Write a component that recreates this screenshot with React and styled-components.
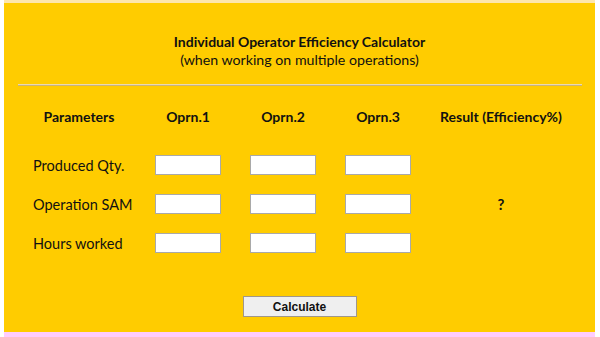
import React from "react";
import styled, { createGlobalStyle } from "styled-components";

const Global = createGlobalStyle`
  html, body { margin: 0; padding: 0; background: #ffffff; }
  body { font-family: Lato, "Open Sans", sans-serif; color: #111; }
`;

const Page = styled.div`
  width: 591px;
  margin-left: 4px;
`;

const Panel = styled.div`
  background: #ffcc00;
  border-top: 3px solid #fde6ad;
  padding: 30px 0 15px;
  display: flex;
  flex-direction: column;
  align-items: center;
`;

const Title = styled.div`
  font-size: 14px;
  font-weight: 700;
  line-height: 18px;
  text-align: center;
`;

const Subtitle = styled.div`
  font-size: 14.2px;
  line-height: 18px;
  text-align: center;
`;

const Rule = styled.div`
  align-self: stretch;
  margin: 15px 13px 0 14px;
  height: 1px;
  background: #e9d9b3;
  border-bottom: 1px solid #c9b27a;
`;

const Grid = styled.div`
  align-self: stretch;
  margin: 15px 0 0 14px;
  display: grid;
  grid-template-columns: 122px 96px 94px 96px 150px;
  grid-template-rows: 35px 20px 20px 20px;
  row-gap: 19px;
`;

const Head = styled.div`
  font-size: 14px;
  font-weight: 700;
  display: flex;
  align-items: center;
  justify-content: center;
  padding-bottom: 4px;
`;

const Label = styled.div`
  font-size: 14.5px;
  display: flex;
  align-items: center;
  padding-left: 15px;
`;

const Cell = styled.div`
  display: flex;
  align-items: center;
  justify-content: center;
`;

const Field = styled.input`
  box-sizing: border-box;
  width: 66px;
  height: 20px;
  background: #fff;
  border: 1px solid #a9a9a9;
  padding: 0 3px;
  margin: 0;
  font: 12px Lato, sans-serif;
`;

const Result = styled.div`
  grid-column: 5;
  grid-row: 2 / 5;
  display: flex;
  align-items: center;
  justify-content: center;
  font-size: 15px;
  font-weight: 700;
`;

const Button = styled.button`
  margin-top: 43px;
  width: 114px;
  height: 21px;
  box-sizing: border-box;
  background: #efefef;
  border: 1px solid #a0978a;
  font: 700 12px "Liberation Sans", Arial, sans-serif;
  color: #111;
  padding: 0;
`;

const Footer = styled.div`
  height: 10px;
  background: #ffccff;
`;

const rows = ["Produced Qty.", "Operation SAM", "Hours worked"];

export default function App() {
  return (
    <Page>
      <Global />
      <Panel>
        <Title>Individual Operator Efficiency Calculator</Title>
        <Subtitle>(when working on multiple operations)</Subtitle>
        <Rule />
        <Grid>
          <Head>Parameters</Head>
          <Head>Oprn.1</Head>
          <Head>Oprn.2</Head>
          <Head>Oprn.3</Head>
          <Head>Result (Efficiency%)</Head>
          {rows.map((r, i) => (
            <React.Fragment key={r}>
              <Label style={{ gridRow: i + 2 }}>{r}</Label>
              <Cell style={{ gridRow: i + 2 }}><Field /></Cell>
              <Cell style={{ gridRow: i + 2 }}><Field /></Cell>
              <Cell style={{ gridRow: i + 2 }}><Field /></Cell>
            </React.Fragment>
          ))}
          <Result>?</Result>
        </Grid>
        <Button>Calculate</Button>
      </Panel>
      <Footer />
    </Page>
  );
}
